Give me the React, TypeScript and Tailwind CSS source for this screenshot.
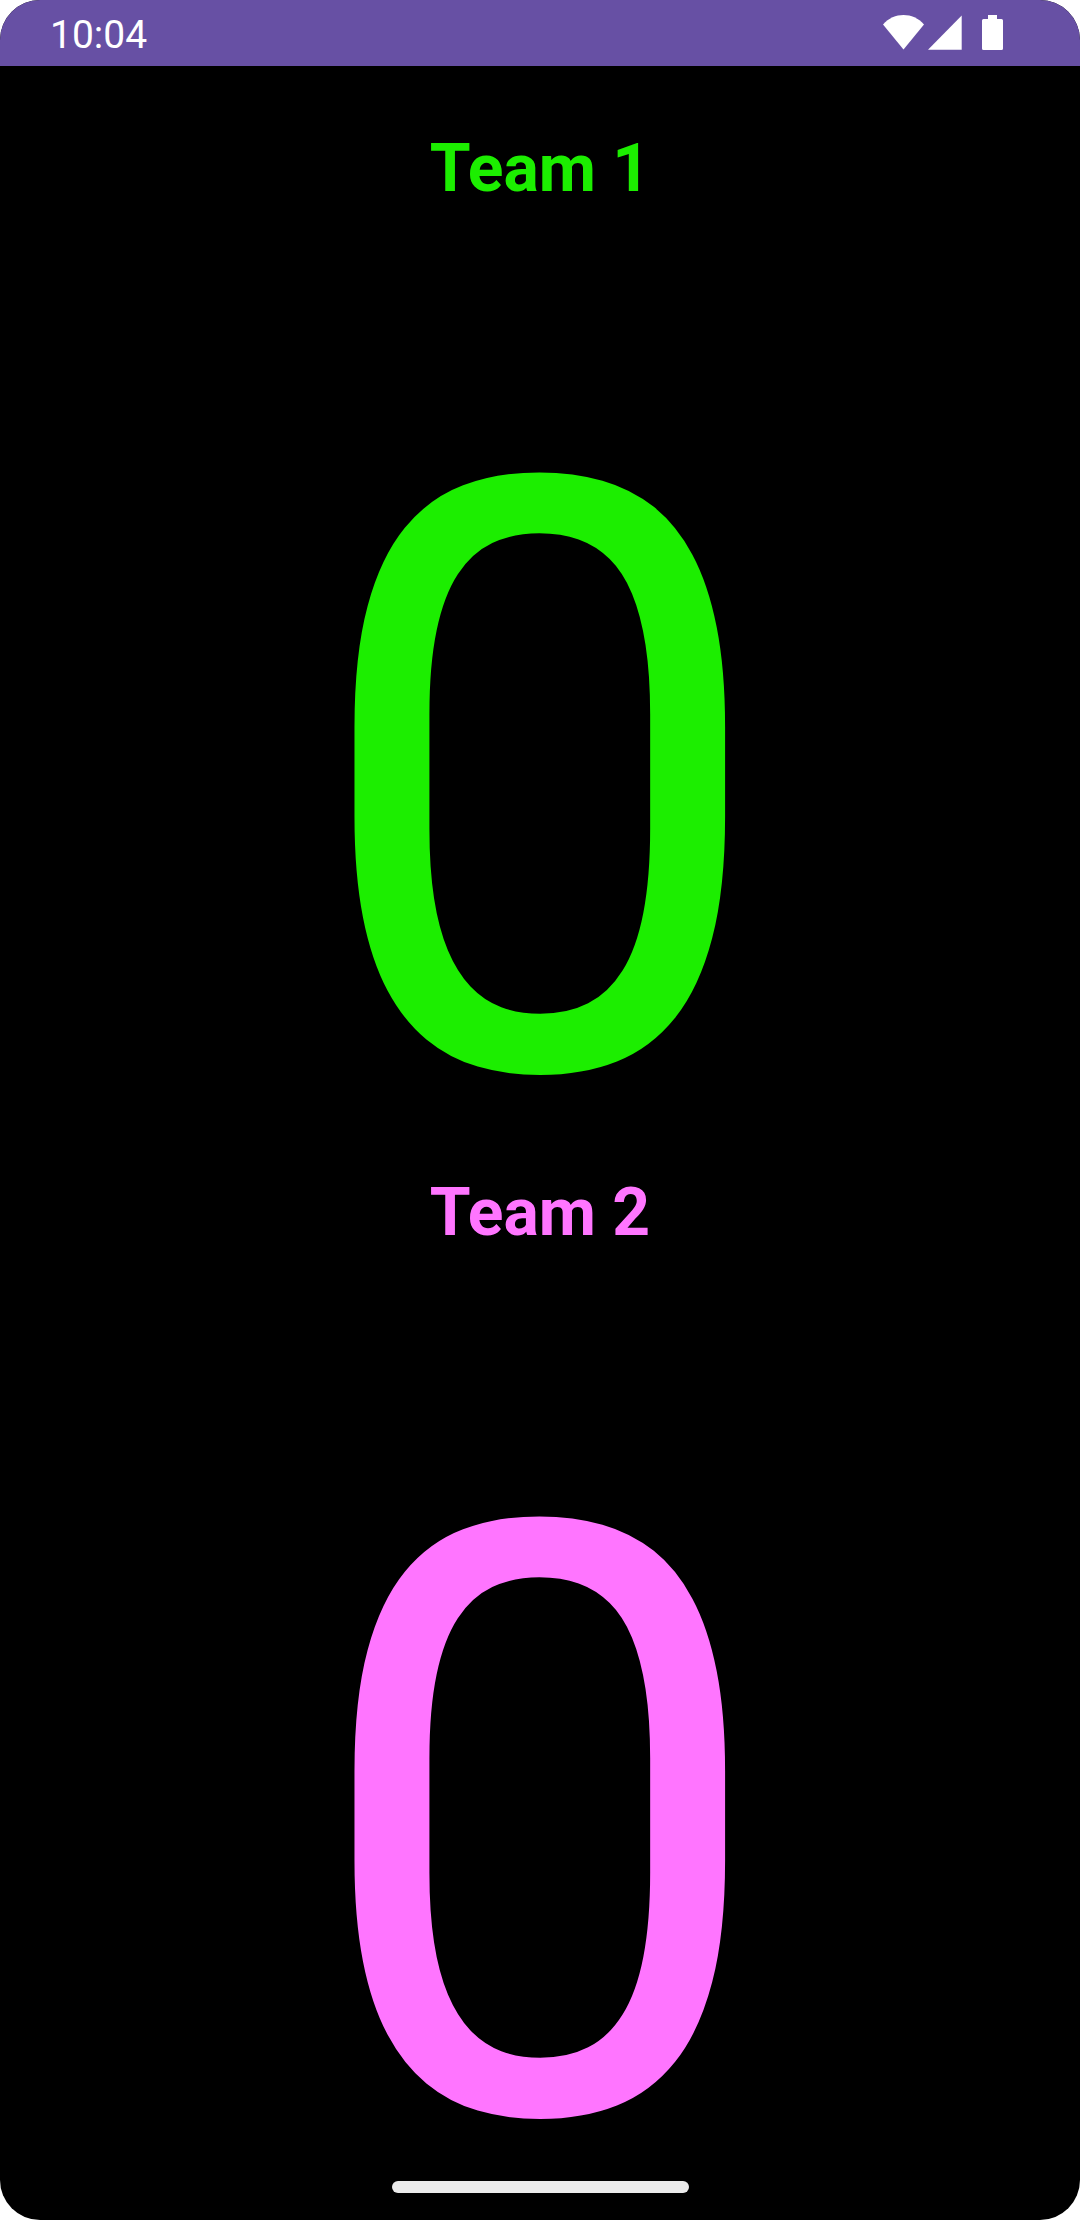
import React from "react";

type Team = { name: string; score: number; tone: string };

const teams: Team[] = [
  { name: "Team 1", score: 0, tone: "text-[#1cee00]" },
  { name: "Team 2", score: 0, tone: "text-[#ff75ff]" },
];

function StatusBar() {
  return (
    <header className="flex h-[66px] items-start justify-between bg-[#6750a4] pr-[77px] pl-[50px] text-white">
      <span className="pt-[13px] text-[39px] leading-[44px]">10:04</span>
      <div className="flex items-start pt-[15px]">
        <svg className="h-[35px] w-[41px]" viewBox="0 0 41 35" fill="currentColor" aria-label="Wi-Fi">
          <path d="M20.500 34.500 0 9.500C5.500 3 13 0 20.500 0S35.500 3 41 9.500Z" />
        </svg>
        <svg className="ml-1 h-[35px] w-[34px]" viewBox="0 0 34 35" fill="currentColor" aria-label="Signal">
          <path d="M0 34.700 33.700 0.500v34.200Z" />
        </svg>
        <svg className="ml-5 h-[35px] w-[21px]" viewBox="0 0 21 35" fill="currentColor" aria-label="Battery">
          <path d="M6 0h9v4h4.500a1.500 1.500 0 0 1 1.500 1.500v28a1.500 1.500 0 0 1-1.500 1.500h-18A1.500 1.500 0 0 1 0 33.500v-28A1.500 1.500 0 0 1 1.500 4H6Z" />
        </svg>
      </div>
    </header>
  );
}

function TeamPanel({ name, score, tone }: Team) {
  return (
    <section className={`flex flex-col items-center ${tone}`}>
      <h2 className="pt-[64px] text-[66px] leading-[78px] font-bold">{name}</h2>
      <button type="button" aria-label={`${name} score`} className="w-full pt-[252px] text-[825px] leading-[650px]">
        {score}
      </button>
    </section>
  );
}

export default function App() {
  return (
    <div className="min-h-screen bg-white font-[Roboto,sans-serif]">
      <div className="flex min-h-screen flex-col overflow-hidden rounded-[40px] bg-black">
        <StatusBar />
        <main className="grow">
          {teams.map((team) => (
            <TeamPanel key={team.name} {...team} />
          ))}
        </main>
        <footer className="flex justify-center pb-[27px]">
          <div className="h-3 w-[297px] rounded-full bg-[#ebebeb]" />
        </footer>
      </div>
    </div>
  );
}
